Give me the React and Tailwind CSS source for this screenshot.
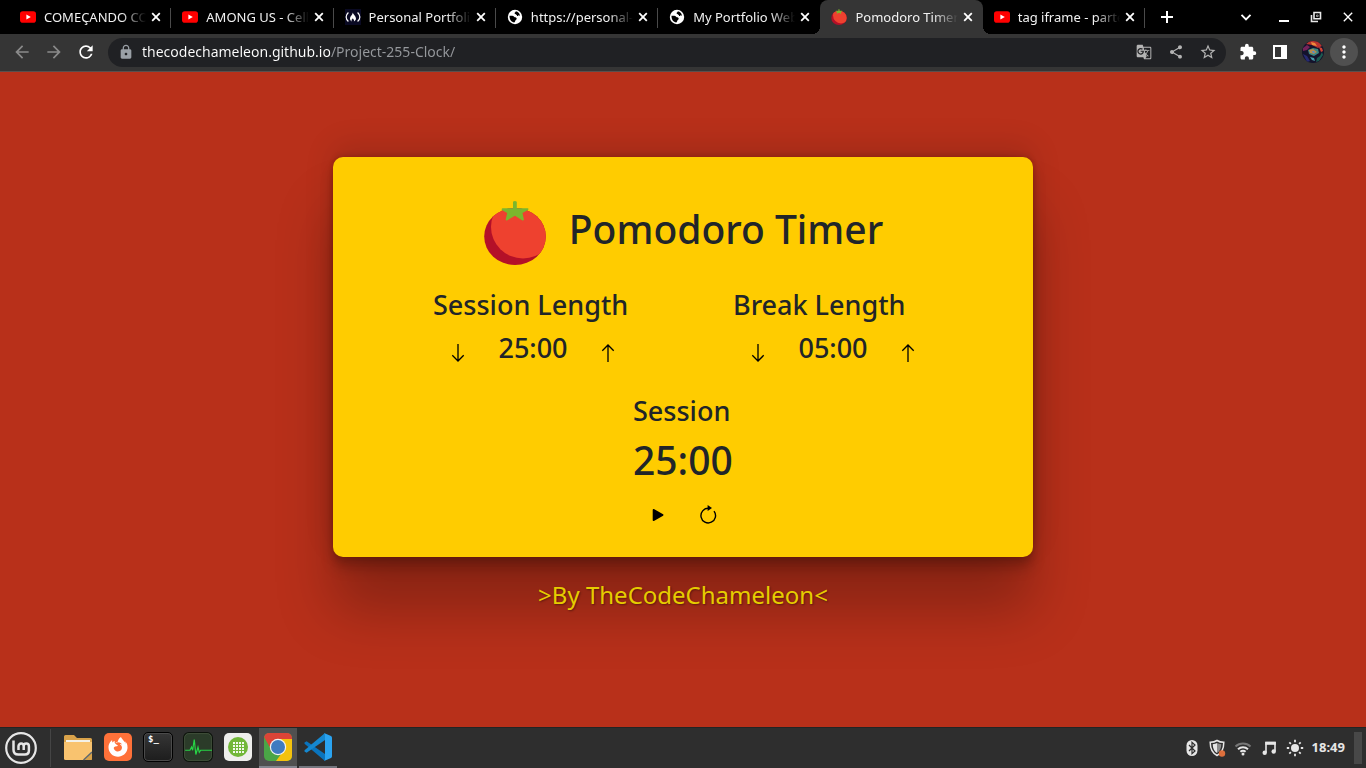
import { useState } from "react";
import {
  MdArrowBack,
  MdArrowForward,
  MdRefresh,
  MdLock,
  MdGTranslate,
  MdShare,
  MdStarBorder,
  MdExtension,
  MdMoreVert,
  MdClose,
  MdAdd,
  MdKeyboardArrowDown,
} from "react-icons/md";
import { FaFirefoxBrowser } from "react-icons/fa";

function YoutubeIcon() {
  return (
    <svg viewBox="0 0 16 16" className="size-4 shrink-0" aria-hidden="true">
      <rect x="0" y="2.3" width="16" height="11.4" rx="2.8" fill="#f00" />
      <path d="M6.4 5.5v5L10.8 8z" fill="#fff" />
    </svg>
  );
}

function CampIcon() {
  return (
    <svg viewBox="0 0 16 16" className="size-4 shrink-0" aria-hidden="true">
      <rect width="16" height="16" fill="#0a0a23" />
      <path d="M3.4 3.5C.4 6.2.4 9.8 3.4 12.5M12.6 3.5c3 2.7 3 6.3 0 9" fill="none" stroke="#fff" strokeWidth="1.2" />
      <path d="M7.6 3.6c.4 2-2.6 3.600-2.600 6.200 0 1.200.7 2.200 1.800 2.600-.8-1.500.4-2.300 1.100-3.200.3 1.200 1.700 1.700 1 3.200 1.500-.5 2.300-1.600 2-3.300C10.500 7 8.600 6 7.600 3.600z" fill="#fff" />
    </svg>
  );
}

function GlobeIcon() {
  return (
    <svg viewBox="0 0 16 16" className="size-4 shrink-0" aria-hidden="true">
      <circle cx="8" cy="8" r="7.200" fill="#fff" />
      <path d="M2.500 6.800c2 .2 3.600-.2 4.600.9.700.9 1.700.3 2.400 1.200.6 1-.2 1.600-.9 2.300-.6.700-.4 1.600-1.400 2.200C4.600 13.200 2.300 10.600 2.500 6.800zM8.800 2.300c.2.900-1.100 1-1.200 1.900 0 1 1.200.7 1.700 1.500.6.900 2.400.3 3.600 1C12.800 4.600 11 2.500 8.800 2.300z" fill="#000" />
    </svg>
  );
}

function Tomato({ className }) {
  return (
    <svg viewBox="0 0 64 64" className={className} aria-hidden="true">
      <defs>
        <clipPath id="tomato-body">
          <ellipse cx="32" cy="35.500" rx="30.800" ry="28.500" />
        </clipPath>
      </defs>
      <ellipse cx="32" cy="35.500" rx="30.800" ry="28.500" fill="#b41028" />
      <ellipse cx="40" cy="26" rx="32" ry="31.500" fill="#ee412f" clipPath="url(#tomato-body)" />
      <path d="M30 .8q1.900-1.500 3.800 0v6.400h10.800q1.700.5.300 1.800L39.500 12l1.400 6.400q-.3 1.800-1.900.8L32 14.800l-8 4.600q-1.600.3-1.200-1.400L24.200 12l-4.900-2.700q-1.500-1.400.2-2.100H30z" fill="#7bb62d" />
    </svg>
  );
}

const TABS = [
  { title: "COMEÇANDO COM", icon: <YoutubeIcon /> },
  { title: "AMONG US - Cellbit", icon: <YoutubeIcon /> },
  { title: "Personal Portfolio", icon: <CampIcon /> },
  { title: "https://personal-p", icon: <GlobeIcon /> },
  { title: "My Portfolio Website", icon: <GlobeIcon /> },
  { title: "Pomodoro Timer", icon: <Tomato className="size-4 shrink-0" />, active: true },
  { title: "tag iframe - parte 2", icon: <YoutubeIcon /> },
];

function Tab({ tab, divider }) {
  return (
    <li
      className={
        "relative flex h-[34px] min-w-0 flex-1 items-center pl-[11px] pr-[7px] " +
        (tab.active ? "rounded-t-lg bg-[#353535]" : "")
      }
    >
      {tab.active && (
        <>
          <span className="absolute bottom-0 -left-2 size-2 bg-[radial-gradient(circle_at_0_0,transparent_8px,#353535_8px)]" />
          <span className="absolute bottom-0 -right-2 size-2 bg-[radial-gradient(circle_at_100%_0,transparent_8px,#353535_8px)]" />
        </>
      )}
      <button className="flex min-w-0 flex-1 items-center gap-2 text-left">
        {tab.icon}
        <span className="min-w-0 flex-1 overflow-hidden whitespace-nowrap text-[13px] leading-5 text-[#f1f1f1] [mask-image:linear-gradient(to_right,black_76%,transparent)]">
          {tab.title}
        </span>
      </button>
      <button aria-label={"Close " + tab.title} className="ml-0.5 flex size-4 items-center justify-center text-white">
        <svg viewBox="0 0 16 16" className="size-4">
          <path d="M4.200 4.200l7.600 7.600M11.800 4.200l-7.600 7.600" stroke="currentColor" strokeWidth="1.800" />
        </svg>
      </button>
      {divider && <span className="absolute right-0 top-2 h-5 w-px bg-[#4a4a4a]" />}
    </li>
  );
}

function TabStrip() {
  return (
    <div className="flex h-[34px] bg-black pl-[9px] text-white">
      <ul className="flex min-w-0 flex-1">
        {TABS.map((tab, i) => (
          <Tab key={i} tab={tab} divider={!tab.active && !TABS[i + 1]?.active} />
        ))}
      </ul>
      <div className="flex w-[221px] items-center justify-between pl-3 pr-2.5">
        <button aria-label="New tab" className="flex size-5 items-center justify-center">
          <svg viewBox="0 0 16 16" className="size-4"><path d="M8 2v12M2 8h12" stroke="#fff" strokeWidth="2" /></svg>
        </button>
        <div className="flex items-center gap-4">
          <button aria-label="Search tabs" className="mr-1 flex size-5 items-center justify-center">
            <svg viewBox="0 0 16 16" className="size-4"><path d="M3.500 5.800L8 10.300l4.500-4.500" fill="none" stroke="#fff" strokeWidth="1.900" /></svg>
          </button>
          <button aria-label="Minimize" className="flex size-4 items-center justify-center">
            <svg viewBox="0 0 16 16" className="size-4"><path d="M3 12h10" stroke="#fff" strokeWidth="2" /></svg>
          </button>
          <button aria-label="Restore" className="flex size-4 items-center justify-center">
            <svg viewBox="0 0 16 16" className="size-4" fill="none" stroke="#e8e8e8" strokeWidth="1.600">
              <path d="M6 3.500h6.500v6.200H6zM3.500 6v6.500H10" />
              <path d="M8.500 6h1.600v1.600H8.500z" strokeWidth="0.600" />
            </svg>
          </button>
          <button aria-label="Close window" className="flex size-4 items-center justify-center">
            <MdClose className="size-4" />
          </button>
        </div>
      </div>
    </div>
  );
}

function Toolbar() {
  return (
    <div className="flex h-[38px] items-center border-b border-[#5a4f4d] bg-[#353535] pb-px pl-3 pr-2">
      <nav className="flex items-center gap-3 pr-3 text-[#8a8a8a]" aria-label="History">
        <button aria-label="Back"><MdArrowBack className="size-5" /></button>
        <button aria-label="Forward"><MdArrowForward className="size-5" /></button>
        <button aria-label="Reload" className="text-white"><MdRefresh className="size-5" /></button>
      </nav>
      <div className="flex h-[29px] min-w-0 flex-1 items-center gap-2 rounded-full bg-[#202124] pl-2.5 pr-2.5 text-[#b4b4b4]">
        <MdLock className="size-4 shrink-0 text-[#9aa0a6]" />
        <input
          type="text"
          aria-label="Address"
          defaultValue="thecodechameleon.github.io/Project-255-Clock/"
          className="min-w-0 flex-1 bg-[linear-gradient(to_right,#fff_188px,#96999d_188px)] bg-clip-text text-sm text-transparent outline-none"
        />
        <div className="flex items-center gap-4">
          <button aria-label="Translate"><MdGTranslate className="size-4" /></button>
          <button aria-label="Share"><MdShare className="size-4" /></button>
          <button aria-label="Bookmark"><MdStarBorder className="-mx-px size-[18px]" /></button>
        </div>
      </div>
      <div className="flex items-center gap-3 pl-3 text-white">
        <button aria-label="Extensions" className="flex size-5 items-center justify-center">
          <MdExtension className="size-[18px]" />
        </button>
        <button aria-label="Side panel" className="flex size-5 items-center justify-center">
          <svg viewBox="0 0 16 16" className="size-4">
            <path fillRule="evenodd" d="M1 1h14v14H1zM3 3v10h6V3z" fill="#fff" />
          </svg>
        </button>
        <div className="flex items-center gap-1.5">
          <button aria-label="Profile">
            <svg viewBox="0 0 22 22" className="size-[22px]">
              <defs>
                <clipPath id="avatar-clip"><circle cx="11" cy="11" r="11" /></clipPath>
              </defs>
              <g clipPath="url(#avatar-clip)">
                <rect width="22" height="22" fill="#14132c" />
                <path d="M4 3l4-3h8l4 5-4 2-6-3z" fill="#b8332f" />
                <path d="M9 1l4 1 2 3-5-1z" fill="#ee8a3c" />
                <path d="M1 7l4-3 3 2-3 3-4 1z" fill="#74235a" />
                <path d="M6 9l5-2 5 1 1 4-5 3-5-2z" fill="#3a8580" />
                <path d="M7 9l4-1 4 3-3 2-4-1z" fill="#b98a4b" />
                <path d="M10 10h2l1 2h-2z" fill="#4f8ed0" />
                <path d="M1 13l4 2 3 5-3 1z" fill="#262a72" />
                <path d="M15 17l3-2 2-4 1 3-4 6-3 1z" fill="#1c5c50" />
                <path d="M17 6l3 1 1 3-2 1z" fill="#d24335" />
                <path d="M8 16l4 1 1 3-3-1z" fill="#459aa8" />
              </g>
            </svg>
          </button>
          <button aria-label="Browser menu" className="flex size-7 items-center justify-center rounded-full bg-[#505050]">
            <MdMoreVert className="size-5" />
          </button>
        </div>
      </div>
    </div>
  );
}

function Arrow({ up }) {
  return (
    <svg viewBox="0 0 20 20" className="size-5" fill="none" stroke="#000" strokeWidth="1.300" aria-hidden="true">
      {up ? <path d="M10 19V2M4.300 7.700L10 2l5.700 5.700" /> : <path d="M10 1v17M4.300 12.300L10 18l5.700-5.700" />}
    </svg>
  );
}

function format(minutes) {
  return String(minutes).padStart(2, "0") + ":00";
}

function LengthControl({ label, value, onChange }) {
  return (
    <section className="w-[200px]">
      <h2 className="whitespace-nowrap text-[27px] font-medium leading-8">{label}</h2>
      <div className="grid grid-cols-[50px_100px_50px] text-center">
        <button
          aria-label={"Decrease " + label}
          className="flex h-16 items-center justify-center"
          onClick={() => onChange(Math.max(1, value - 1))}
        >
          <Arrow />
        </button>
        <span className="text-[27px] font-medium leading-[54px]">{format(value)}</span>
        <button
          aria-label={"Increase " + label}
          className="flex h-16 items-center justify-center"
          onClick={() => onChange(Math.min(60, value + 1))}
        >
          <Arrow up />
        </button>
      </div>
    </section>
  );
}

function PomodoroCard() {
  const [session, setSession] = useState(25);
  const [rest, setRest] = useState(5);
  const reset = () => {
    setSession(25);
    setRest(5);
  };
  return (
    <div className="flex w-full max-w-[700px] flex-col items-center rounded-[10px] bg-[#ffcc00] pb-5 pt-11 text-[#212529] shadow-[0_54px_55px_rgba(0,0,0,0.25),0_-12px_30px_rgba(0,0,0,0.12),0_4px_6px_rgba(0,0,0,0.12),0_12px_13px_rgba(0,0,0,0.17),0_-3px_5px_rgba(0,0,0,0.09)]">
      <div className="flex h-16 gap-[22px]">
        <Tomato className="size-16" />
        <h1 className="whitespace-nowrap text-[39px] font-medium leading-[56px]">Pomodoro Timer</h1>
      </div>
      <div className="mt-6 flex gap-[100px]">
        <LengthControl label="Session Length" value={session} onChange={setSession} />
        <LengthControl label="Break Length" value={rest} onChange={setRest} />
      </div>
      <section className="mt-2.5 w-[100px]">
        <h2 className="text-[27px] font-medium leading-8">Session</h2>
        <p className="text-[39px] font-medium leading-[66px]">{format(session)}</p>
        <div className="grid grid-cols-2">
          <button aria-label="Start" className="flex h-11 items-center justify-center">
            <svg viewBox="0 0 20 20" className="size-5">
              <path d="M5.500 4.800v10.400l9.200-5.200z" fill="#000" stroke="#000" strokeWidth="1.600" strokeLinejoin="round" />
            </svg>
          </button>
          <button aria-label="Reset" className="flex h-11 items-center justify-center" onClick={reset}>
            <svg viewBox="0 0 20 20" className="size-5" fill="none" stroke="#000">
              <path d="M10.500 3.300A7.300 7.300 0 1 0 16 6.100" strokeWidth="1.400" />
              <path d="M9.600 0v6l4.400-3z" fill="#000" stroke="none" />
            </svg>
          </button>
        </div>
      </section>
    </div>
  );
}

function MintIcon() {
  return (
    <svg viewBox="0 0 32 32" className="size-8" fill="none" stroke="#e6e6e6" aria-hidden="true">
      <circle cx="16" cy="16" r="14.800" strokeWidth="2.200" />
      <path d="M8.500 8.500v9.200c0 3 1.800 4.800 4.800 4.800h6.600c2.500 0 4-1.500 4-4v-4.300a2.600 2.600 0 0 0-5.200 0V18m0-3.800a2.600 2.600 0 0 0-5.200 0V18" strokeWidth="2.500" />
    </svg>
  );
}

function FolderIcon() {
  return (
    <svg viewBox="0 0 28 28" className="size-7">
      <path d="M0 3.500q0-1.500 1.500-1.500H10l3 3h13.500Q28 5 28 6.500V12H0z" fill="#d9a24a" />
      <path d="M2 7h24v4H2z" fill="#f4f1e8" />
      <path d="M0 9h28v16.500q0 1.500-1.500 1.500h-25Q0 27 0 25.500z" fill="#f9c36f" />
      <path d="M28 19v6.500q0 1.500-1.500 1.500H20z" fill="#d9a24a" />
      <path d="M19.500 27L28 19" stroke="#5b6770" strokeWidth="1.400" />
    </svg>
  );
}

function FirefoxIcon() {
  return (
    <span className="flex size-7 items-center justify-center rounded-[5px] bg-[#ff7139] text-white">
      <FaFirefoxBrowser className="size-5" />
    </span>
  );
}

function TerminalIcon() {
  return (
    <span className="flex h-[30px] w-[30px] items-start rounded-[5px] border border-black bg-gradient-to-b from-[#363636] to-[#1d1d1d] pl-1 pt-0.5 font-['DejaVu_Sans_Mono',monospace] text-[9px] font-bold leading-[9px] text-white shadow-[0_0_0_1px_#4b4b4b_inset]">
      $_
    </span>
  );
}

function MonitorIcon() {
  return (
    <svg viewBox="0 0 28 28" className="size-[30px]">
      <rect x=".5" y=".5" width="27" height="27" rx="5" fill="#2b3b29" stroke="#0c120b" />
      <rect x="1.500" y="1.500" width="25" height="25" rx="4" fill="none" stroke="#46553f" strokeWidth=".7" />
      <path d="M2 17h4.500l1.500-3 1 3 1.500-10 1.500 14 2-7 1.200 5 1.300-2H27" fill="none" stroke="#27d545" strokeWidth="1.100" />
    </svg>
  );
}

function AppsIcon() {
  return (
    <svg viewBox="0 0 28 28" className="size-7">
      <rect width="28" height="28" rx="5" fill="#eeeeec" />
      <circle cx="14" cy="14" r="10" fill="#71b738" />
      <g fill="#fff">
        {[9, 12, 15, 18].map((x) =>
          [9, 12, 15, 18].map((y) => <rect key={x + "-" + y} x={x} y={y} width="2" height="2" fillOpacity="0.9" />)
        )}
      </g>
    </svg>
  );
}

function ChromeIcon() {
  return (
    <svg viewBox="0 0 28 28" className="size-7">
      <defs>
        <clipPath id="chrome-clip"><rect width="28" height="28" rx="5" /></clipPath>
      </defs>
      <g clipPath="url(#chrome-clip)">
        <rect width="28" height="28" fill="#4aa546" />
        <path d="M14 6h14v22H12l8-11z" fill="#f4c20d" />
        <path d="M0 0h28v6H14L7.500 17 0 4z" fill="#dc4437" />
      </g>
      <circle cx="14" cy="14" r="8.200" fill="#f2f2f2" />
      <circle cx="14" cy="14" r="7" fill="#3f7bc0" />
    </svg>
  );
}

function CodeIcon() {
  return (
    <svg viewBox="0 0 28 28" className="size-7">
      <path d="M2.600 8.300L21 21v7L.5 10.800V9.600z" fill="#0a74bd" />
      <path d="M2.600 19.700L21 7V0L.5 17.200v1.200z" fill="#1588d0" />
      <path d="M20 0l7 3.100q1 .6 1 1.600v18.600q0 1-1 1.600L20 28q1-.5 1-2V2q0-1.500-1-2z" fill="#2aa3f0" />
    </svg>
  );
}

const APPS = [
  { name: "Files", icon: <FolderIcon /> },
  { name: "Firefox", icon: <FirefoxIcon /> },
  { name: "Terminal", icon: <TerminalIcon /> },
  { name: "System Monitor", icon: <MonitorIcon /> },
  { name: "Applications", icon: <AppsIcon /> },
  { name: "Chrome", icon: <ChromeIcon />, state: "border-[#83858f] bg-[#505050]" },
  { name: "Code", icon: <CodeIcon />, state: "border-[#73757d]" },
];

function Taskbar() {
  return (
    <footer className="flex h-[41px] items-stretch border-t border-[#242424] bg-[#2e2e2e] pl-[5px] pr-1 text-[#e6e6e6]">
      <button aria-label="Menu" className="flex items-center"><MintIcon /></button>
      <span className="my-px ml-[13px] mr-2 w-px bg-[#454545]" />
      <div className="flex flex-1 gap-0.5">
        {APPS.map((app) => (
          <button
            key={app.name}
            aria-label={app.name}
            className={"flex w-[38px] items-center justify-center border-b-2 " + (app.state ?? "border-transparent")}
          >
            {app.icon}
          </button>
        ))}
      </div>
      <div className="flex items-center gap-2">
        <button aria-label="Bluetooth">
          <svg viewBox="0 0 16 16" className="size-4">
            <rect x="2.500" y="0" width="11" height="16" rx="5.500" fill="#e6e6e6" />
            <path d="M5 5l6 6-3 2.700V2.300L11 5l-6 6" fill="none" stroke="#2e2e2e" strokeWidth="1.200" />
          </svg>
        </button>
        <button aria-label="Updates">
          <svg viewBox="0 0 18 18" className="size-[18px]">
            <path d="M9 1.500c2 1.300 4.300 1.800 6.800 1.800 0 6-1.300 10.400-6.800 13.200C3.500 13.700 2.200 9.300 2.200 3.300 4.700 3.300 7 2.800 9 1.500z" fill="none" stroke="#e6e6e6" strokeWidth="1.500" />
            <path d="M9 4c-1.300.8-2.700 1-4.300 1.200C4.900 9.600 6 12.200 9 14z" fill="#e6e6e6" />
            <path d="M9 4c1.300.8 2.700 1 4.300 1.200C13.100 9.600 12 12.200 9 14z" fill="#8c8c8c" />
            <circle cx="14" cy="14.500" r="3.200" fill="#dd6f3c" />
          </svg>
        </button>
        <button aria-label="Wi-Fi">
          <svg viewBox="0 0 18 18" className="size-[18px]" fill="none" strokeWidth="2">
            <path d="M1.500 7.500a11 11 0 0 1 15 0" stroke="#777" />
            <path d="M4 10.200a7.500 7.500 0 0 1 10 0M6.400 12.800a4 4 0 0 1 5.200 0" stroke="#e6e6e6" />
            <circle cx="9" cy="15" r="1.500" fill="#e6e6e6" />
          </svg>
        </button>
        <button aria-label="Sound">
          <svg viewBox="0 0 18 18" className="size-[18px]">
            <path d="M6 13.500V3.500h9V12" fill="none" stroke="#e6e6e6" strokeWidth="1.600" />
            <path d="M5.300 2.800h10.500v3H5.300z" fill="#e6e6e6" />
            <circle cx="4.700" cy="13.800" r="2.200" fill="#e6e6e6" />
            <circle cx="13.700" cy="12.500" r="2.200" fill="#e6e6e6" />
          </svg>
        </button>
        <button aria-label="Brightness">
          <svg viewBox="0 0 18 18" className="size-[18px]" stroke="#e6e6e6" strokeWidth="1.800">
            <circle cx="9" cy="9" r="4" fill="#e6e6e6" stroke="none" />
            <path d="M9 .8v2.400M9 14.800v2.400M.8 9h2.400M14.800 9h2.400M3.300 3.300l1.600 1.600M13.100 13.100l1.600 1.600M14.700 3.300l-1.600 1.600M4.900 13.100l-1.600 1.600" />
          </svg>
        </button>
        <time className="pr-px text-[13px] font-bold">18:49</time>
        <button aria-label="Show desktop" className="h-8 w-2 bg-[#484848]" />
      </div>
    </footer>
  );
}

export default function App() {
  return (
    <div className="flex min-h-screen flex-col bg-[#b8301a] font-['Noto_Sans',sans-serif]">
      <header>
        <TabStrip />
        <Toolbar />
      </header>
      <main className="flex flex-1 flex-col items-center justify-center">
        <PomodoroCard />
        <a
          href="https://github.com/thecodechameleon"
          className="relative pb-[30px] pt-5 text-2xl leading-9 text-[#e6cc00] [text-shadow:1px_1px_2px_rgba(0,0,0,0.4)]"
        >
          &gt;By TheCodeChameleon&lt;
        </a>
      </main>
      <Taskbar />
    </div>
  );
}
